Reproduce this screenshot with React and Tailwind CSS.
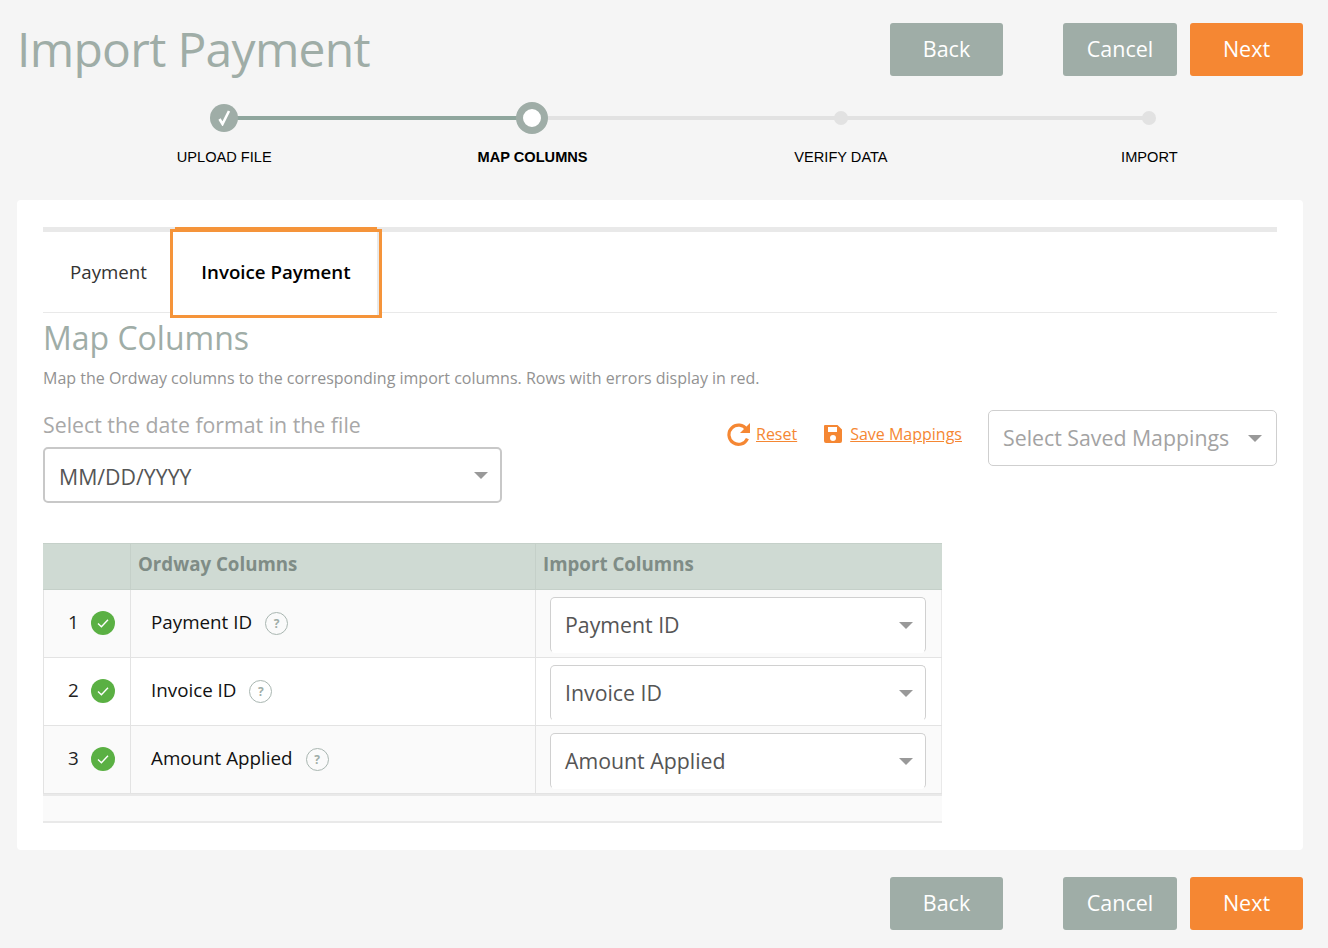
import React from "react";

function Btn({ children, orange, className = "" }) {
  return (
    <button className={`h-[53px] rounded-[3px] pb-[1px] text-[21.5px] leading-none text-white ${orange ? "bg-[#f58733]" : "bg-[#9fada7]"} ${className}`}>
      {children}
    </button>
  );
}

function Buttons() {
  return (
    <div className="flex">
      <Btn className="w-[113px] mr-[60px]">Back</Btn>
      <Btn className="w-[114px] mr-[13px]">Cancel</Btn>
      <Btn orange className="w-[113px]">Next</Btn>
    </div>
  );
}

function Caret() {
  return (
    <svg width="14" height="7" viewBox="0 0 14 7">
      <path d="M0 0h14L7 7z" fill="#999" />
    </svg>
  );
}

function Select({ children, className = "", text = "text-[#555]", textPad = "" }) {
  return (
    <div className={`flex items-center justify-between bg-white rounded-[5px] pl-[14px] pr-[12px] ${className}`}>
      <span className={`text-[21.3px] leading-none ${text} ${textPad}`}>{children}</span>
      <Caret />
    </div>
  );
}

function Step({ label, bold, children }) {
  return (
    <div className="w-[308.4px] flex flex-col items-center">
      <div className="h-8 flex items-center justify-center">{children}</div>
      <div className={`mt-[15px] text-[14.6px] leading-[16px] text-black font-['Liberation_Sans',sans-serif] ${bold ? "font-bold" : ""}`}>{label}</div>
    </div>
  );
}

function Row({ n, label, alt }) {
  return (
    <div className={`flex h-[68px] border-b border-[#e3e3e3] ${alt ? "bg-[#fafafa]" : "bg-white"}`}>
      <div className="w-[88px] shrink-0 flex items-center border-r border-l border-[#e3e3e3] pl-[24px] pb-[2px]">
        <span className="w-[23px] text-[18.8px] leading-none text-[#222]">{n}</span>
        <svg width="24" height="24" viewBox="0 0 24 24">
          <circle cx="12" cy="12" r="12" fill="#5ab043" />
          <path d="M7 12.5l3.4 3.2L17 8.8" fill="none" stroke="#fff" strokeWidth="1.4" />
        </svg>
      </div>
      <div className="w-[405px] shrink-0 flex items-center border-r border-[#e3e3e3] pl-[20px] pb-[2px]">
        <span className="text-[18.8px] leading-none text-[#111] mr-[13px]">{label}</span>
        <span className="mt-[2px] w-[23px] h-[23px] rounded-full border border-[#a9b6b1] flex items-center justify-center text-[12px] font-bold leading-none text-[#9fada7]">?</span>
      </div>
      <div className="flex-1 border-r border-[#e9e9e9] pl-[14px] pr-[15px] pt-[7px]">
        <Select className="h-[56px] border border-[#d0d0d0] border-b-white">{label}</Select>
      </div>
    </div>
  );
}

export default function App() {
  return (
    <div className="w-[1328px] h-[948px] overflow-hidden bg-[#f5f5f5] font-['Open_Sans',sans-serif]">
      <div className="flex justify-between items-start pl-[17px] pr-[25px] pt-[23px]">
        <h1 className="text-[48px] leading-[51px] font-normal text-[#9fada7] tracking-[-0.7px]">Import Payment</h1>
        <Buttons />
      </div>

      <div className="relative flex pl-[70px] mt-[26px]">
        <div className="absolute left-[224px] top-[14px] w-[308px] h-1 bg-[#8fa69d]" />
        <div className="absolute left-[532px] top-[14px] w-[617px] h-1 bg-[#e2e2e2]" />
        <Step label="UPLOAD FILE">
          <div className="relative w-7 h-7 rounded-full bg-[#9fada7] flex items-center justify-center">
            <svg width="14" height="16" viewBox="0 0 14 16">
              <path d="M2.5 9l3 5L12 1" fill="none" stroke="#fff" strokeWidth="2.6" />
            </svg>
          </div>
        </Step>
        <Step label="MAP COLUMNS" bold>
          <div className="relative -ml-[1px] w-8 h-8 rounded-full border-[7px] border-[#9fada7] bg-white" />
        </Step>
        <Step label="VERIFY DATA">
          <div className="relative w-[14px] h-[14px] rounded-full bg-[#e2e2e2]" />
        </Step>
        <Step label="IMPORT">
          <div className="relative w-[14px] h-[14px] rounded-full bg-[#e2e2e2]" />
        </Step>
      </div>

      <div className="ml-[17px] mr-[25px] mt-[35px] h-[650px] bg-white rounded-[4px] pt-[27px] px-[26px]">
        <div className="h-[5px] bg-[#e9e9e9]" />
        <div className="relative h-[81px] border-b border-[#e9e9e9] flex">
          <div className="w-[127px] pl-[27px] pt-[27px] text-[18.7px] leading-[25px] text-[#333]">Payment</div>
          <div className="absolute left-[127px] top-[-3px] w-[212px] h-[89px] border-[3px] border-[#f5943a] bg-white flex justify-center pt-[27px] text-[18.7px] leading-[25px] font-semibold text-black">
            <span className="absolute left-[2px] right-[2px] top-[-5px] h-[2px] bg-[#f5943a]" />
            <span className="absolute right-0 top-0 bottom-0 w-[2px] bg-[#e9e9e9]" />
            Invoice Payment
          </div>
        </div>
        <h2 className="mt-[5px] text-[32px] leading-[40px] font-normal text-[#9fada7]">Map Columns</h2>
        <p className="mt-[10px] text-[16px] leading-[20px] text-[#929292]">Map the Ordway columns to the corresponding import columns. Rows with errors display in red.</p>

        <div className="flex justify-between mt-[24px]">
          <div>
            <div className="text-[21.3px] leading-[28px] text-[#a8a8a8] -mt-[1px]">Select the date format in the file</div>
            <Select textPad="pt-[3px]" className="mt-[8px] w-[459px] h-[56px] border-2 border-[#c8c8c8]">MM/DD/YYYY</Select>
          </div>
          <div className="flex items-start">
            <div className="flex items-center mt-[8px] text-[#f58733]">
              <svg width="24" height="24" viewBox="0 0 24 24" className="mr-[5px] -ml-[1px]">
                <path d="M19.6 7.5A9.6 9.6 0 1 0 20.4 16.5" fill="none" stroke="#f58733" strokeWidth="3.2" />
                <path d="M23 1v10h-10z" fill="#f58733" />
              </svg>
              <span className="text-[16px] leading-[28px] underline mr-[26px]">Reset</span>
              <svg width="20" height="20" viewBox="0 0 20 20" className="mr-[7px]">
                <path fillRule="evenodd" d="M2 1h12.5L19 5.5V17a2 2 0 0 1-2 2H3a2 2 0 0 1-2-2V2a1 1 0 0 1 1-1zM5 3v5h9V3zm5 8a3 3 0 1 0 0 6 3 3 0 0 0 0-6z" fill="#f58733" />
              </svg>
              <span className="text-[16px] leading-[28px] underline">Save Mappings</span>
            </div>
            <Select text="text-[#a3a3a3]" className="ml-[26px] -mt-[2px] w-[289px] h-[56px] border border-[#cfcfcf] !pr-[14px]">Select Saved Mappings</Select>
          </div>
        </div>

        <div className="w-[899px] mt-[40px]">
          <div className="flex h-[47px] bg-[#cfdad3] border-t border-b border-[#c5d0c9] text-[18.7px] font-bold text-[#7f8c86]">
            <div className="w-[88px] border-r border-[#c5d0c9]" />
            <div className="w-[405px] border-r border-[#c5d0c9] pl-[7px] pb-[5px] flex items-center">Ordway Columns</div>
            <div className="pl-[7px] pb-[5px] flex items-center">Import Columns</div>
          </div>
          <Row n="1" label="Payment ID" alt />
          <Row n="2" label="Invoice ID" />
          <Row n="3" label="Amount Applied" alt />
          <div className="h-[29px] bg-[#fafafa] border-t-2 border-b-2 border-[#e9e9e9]" />
        </div>
      </div>

      <div className="flex justify-end pr-[25px] mt-[27px]">
        <Buttons />
      </div>
    </div>
  );
}
